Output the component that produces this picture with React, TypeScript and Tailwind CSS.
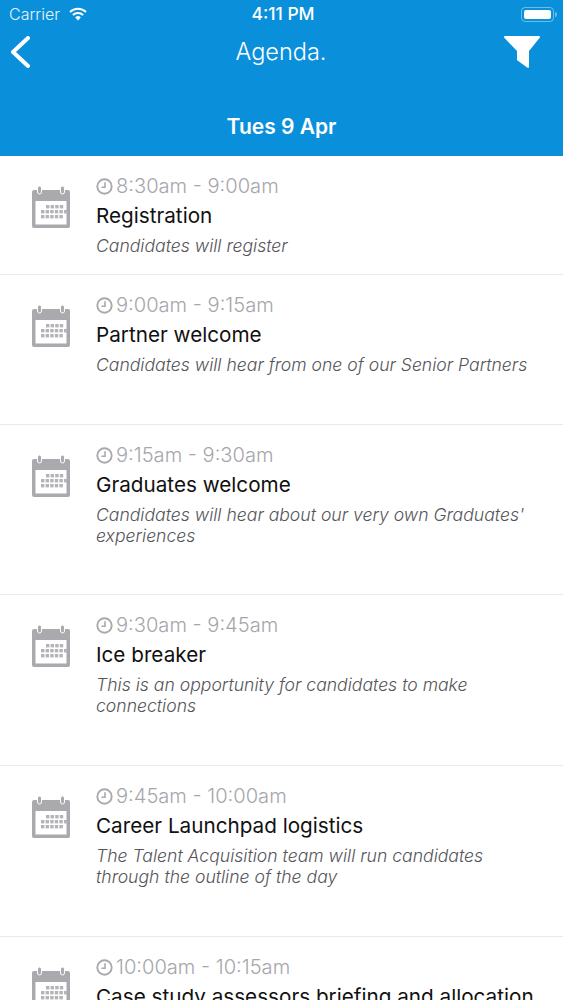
const items = [
  { time: '8:30am - 9:00am', title: 'Registration', desc: ['Candidates will register'], height: 'h-[119px]' },
  { time: '9:00am - 9:15am', title: 'Partner welcome', desc: ['Candidates will hear from one of our Senior Partners'], height: 'h-[150px]' },
  { time: '9:15am - 9:30am', title: 'Graduates welcome', desc: ["Candidates will hear about our very own Graduates'", 'experiences'], height: 'h-[170px]' },
  { time: '9:30am - 9:45am', title: 'Ice breaker', desc: ['This is an opportunity for candidates to make', 'connections'], height: 'h-[171px]' },
  { time: '9:45am - 10:00am', title: 'Career Launchpad logistics', desc: ['The Talent Acquisition team will run candidates', 'through the outline of the day'], height: 'h-[171px]' },
  { time: '10:00am - 10:15am', title: 'Case study assessors briefing and allocation', desc: [], height: 'h-[150px]' },
];

function CalendarIcon() {
  return (
    <svg width="40" height="42" viewBox="0 0 40 42" className="shrink-0">
      <path d="M3 4h34a2 2 0 0 1 2 2v34a2 2 0 0 1-2 2H3a2 2 0 0 1-2-2V6a2 2 0 0 1 2-2z" fill="#a9a9ae" />
      <rect x="4.5" y="15" width="31" height="23.5" fill="#ffffff" />
      <rect x="6.5" y="0" width="4" height="8" rx="2" fill="#a9a9ae" stroke="#ffffff" strokeWidth="1" />
      <rect x="29.5" y="0" width="4" height="8" rx="2" fill="#a9a9ae" stroke="#ffffff" strokeWidth="1" />
      {[0, 1, 2, 3].map((c) => (
        <rect key={c} x={15 + c * 4.6} y="19" width="3.4" height="3.4" fill="#b4b4b8" />
      ))}
      {[0, 1, 2, 3, 4, 5].map((c) => (
        <rect key={c} x={10 + c * 4.6} y="24" width="3.4" height="3.4" fill="#b4b4b8" />
      ))}
      {[0, 1, 2, 3, 4].map((c) => (
        <rect key={c} x={10 + c * 4.6} y="29" width="3.4" height="3.4" fill="#b4b4b8" />
      ))}
    </svg>
  );
}

function ClockIcon() {
  return (
    <svg width="17" height="17" viewBox="0 0 17 17" className="shrink-0">
      <circle cx="8.5" cy="8.5" r="7.2" fill="none" stroke="#a9a9ae" strokeWidth="1.9" />
      <path d="M9 4.2v5H5.4" fill="none" stroke="#a9a9ae" strokeWidth="1.6" />
    </svg>
  );
}

export default function App() {
  return (
    <div className="h-[1000px] w-[563px] overflow-hidden bg-white font-['Inter',sans-serif]">
      {/* Header */}
      <div className="flex h-[156px] flex-col bg-[#0a8fdb] text-white">
        <div className="flex h-[28px] items-center justify-between pl-[9px] pr-[6px]">
          <div className="flex w-[130px] items-center gap-[8px]">
            <span className="text-[16px] font-light text-white/90">Carrier</span>
            <svg width="20" height="14" viewBox="0 0 20 14">
              <path d="M10 13.5 7.2 10.4a4 4 0 0 1 5.6 0z" fill="#fff" />
              <path d="M4.9 8a7.4 7.4 0 0 1 10.2 0M2 5a11.4 11.4 0 0 1 16 0" fill="none" stroke="#fff" strokeWidth="2" />
            </svg>
          </div>
          <span className="text-[17.5px] font-medium">4:11 PM</span>
          <div className="flex w-[130px] items-center justify-end gap-[1px]">
            <div className="flex h-[15px] w-[33px] items-center rounded-[4px] border border-white/40 p-[2px]">
              <div className="h-full w-full rounded-[2px] bg-white" />
            </div>
            <div className="h-[5px] w-[2px] rounded-r-sm bg-white/40" />
          </div>
        </div>
        <div className="flex h-[48px] items-center justify-between pl-[10px] pr-[23px]">
          <svg width="20" height="32" viewBox="0 0 20 32" className="mr-[28px]">
            <path d="M18 2 3 16l15 14" fill="none" stroke="#fff" strokeWidth="4" strokeLinecap="round" strokeLinejoin="round" />
          </svg>
          <span className="text-[23.5px] font-light">Agenda.</span>
          <svg width="36" height="32" viewBox="0 0 36 32">
            <path d="M1.5 0h33c1.4 0 2 1 1 2L25 15v15.500c0 1.300-.8 1.800-1.800 1L13.500 24.500c-.4-.3-.5-.6-.5-1V15L.5 2c-1-1-.4-2 1-2z" fill="#fff" />
          </svg>
        </div>
        <div className="flex flex-1 items-center justify-center pt-[22px]">
          <span className="text-[21px] font-semibold">Tues 9 Apr</span>
        </div>
      </div>

      {/* Agenda list */}
      {items.map((item) => (
        <div key={item.time} className={`flex ${item.height} gap-[25px] border-b border-[#e9e9eb] pl-[31px] pr-[20px] pt-[19px]`}>
          <div className="pt-[11px]">
            <CalendarIcon />
          </div>
          <div className="min-w-0 flex-1">
            <div className="flex h-[22px] items-center gap-[3px] text-[20.100px] font-light text-[#a6a6ab]">
              <ClockIcon />
              <span>{item.time}</span>
            </div>
            <div className="mt-[5px] whitespace-nowrap text-[20.7px] leading-[28px] text-[#111]">{item.title}</div>
            <div className="mt-[5px] text-[17.6px] font-light italic leading-[21px] text-[#55555a]">
              {item.desc.map((line) => (
                <div key={line} className="whitespace-nowrap">{line}</div>
              ))}
            </div>
          </div>
        </div>
      ))}
    </div>
  );
}
